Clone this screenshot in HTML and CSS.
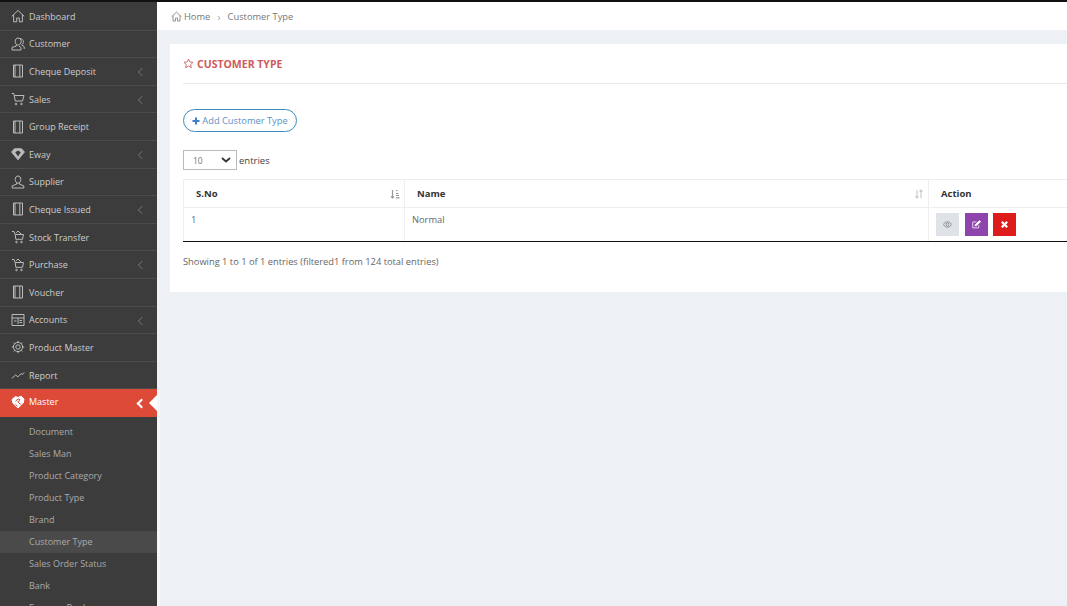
FILE: index.html
```html
<!DOCTYPE html>
<html lang="en">
<head>
    <meta charset="UTF-8">
    <meta name="viewport" content="width=device-width, initial-scale=1.0">
    <title>Customer Type</title>
    <link rel="stylesheet" href="styles.css">
</head>
<body>
    <svg class="defs" width="0" height="0">
        <symbol id="i-home" viewBox="0 0 14 14"><path d="M.8 7.400 7 1.400l6.200 6M2.600 5.800v7h3.100V9h2.600v3.800h3.100v-7"/></symbol>
        <symbol id="i-user" viewBox="0 0 14 14"><path d="M4.200 4.400C4.200 2.400 5.400 1 7 1s2.800 1.400 2.800 3.400S8.600 8.200 7 8.200 4.200 6.400 4.200 4.400zM5.600 8v1.200L1.200 10.800V13h11.600v-2.200L8.400 9.200V8"/></symbol>
        <symbol id="i-users" viewBox="0 0 14 14"><path d="M4.200 4.400C4.200 2.400 5.400 1 7 1s3.200 1.400 3.200 3.400S8.600 8.200 7 8.200 4.200 6.400 4.200 4.400zM5.200 8v1.200L1 10.400V13h9v-2.400L8 9.200M9 1.500c2 .2 3.400 1.400 3.400 3.200 0 1.400-.8 2.600-1.800 3.200l2.600 1.800V12"/></symbol>
        <symbol id="i-book" viewBox="0 0 14 14"><path d="M2.500 1h9v12h-9zM8.800 1v12M4 1v12"/></symbol>
        <symbol id="i-cart" viewBox="0 0 14 14"><path d="M.8 1.500h2l1.500 7.500h7.200l1.500-5.500H3.400"/><circle cx="5" cy="12" r=".8"/><circle cx="10.500" cy="12" r=".8"/></symbol>
        <symbol id="i-bag" viewBox="0 0 14 14"><path d="M1 1.500h2l1.200 3h8.300l-1 4.800H4.800L4.200 4.500M5.200 2.800 7 1l3 3"/><circle cx="5.500" cy="12" r=".8"/><circle cx="10.500" cy="12" r=".8"/></symbol>
        <symbol id="i-gem" viewBox="0 0 14 14"><path class="fill" d="M3.500 1.800h7L13.400 5 7 12.800.6 5z"/><path class="cut" d="M4.200 5.200 7 9.600l2.800-4.400L7 3.400z"/></symbol>
        <symbol id="i-calc" viewBox="0 0 14 14"><path d="M1 1.500h12v11H1zM7 5v6M1 5h12M3 8h2.500M8.500 7.500h2.500M8.500 9.500h2.500"/></symbol>
        <symbol id="i-gear" viewBox="0 0 14 14"><circle cx="7" cy="7" r="2.200"/><circle cx="7" cy="7" r="4.600"/><path d="M7 .8v1.600M7 11.600v1.600M.8 7h1.600M11.600 7h1.600M2.600 2.600l1.200 1.200M10.200 10.200l1.200 1.200M2.600 11.400l1.200-1.200M10.200 3.800l1.200-1.200"/></symbol>
        <symbol id="i-line" viewBox="0 0 14 14"><path d="M.8 10.500 4.500 7l2.500 1.800L10 5.500l1.500 1L13.200 4.500"/></symbol>
        <symbol id="i-shake" viewBox="0 0 14 14"><path class="fill-white" d="M1 4.500 4.500 1.500l2.500 1 3-1.300 3 2.800-.8 4L7 13 2 8.300z"/><path class="cut-red" d="M4.500 6.200 7.200 4l1.800.8L6.800 7l3 2.400M4.500 9.500l2 1.800"/></symbol>
        <symbol id="i-star" viewBox="0 0 14 14"><path d="M7 1.300 8.700 5l4.100.5-3 2.800.8 4.100L7 10.300l-3.600 2.100.8-4.100-3-2.800L5.300 5z"/></symbol>
    </svg>

    <div class="layout">
        <aside class="sidebar">
            <ul class="menu">
                <li class="menu-item"><svg class="icon"><use href="#i-home"/></svg>Dashboard</li>
                <li class="menu-item"><svg class="icon"><use href="#i-users"/></svg>Customer</li>
                <li class="menu-item has-sub"><svg class="icon"><use href="#i-book"/></svg>Cheque Deposit</li>
                <li class="menu-item has-sub"><svg class="icon"><use href="#i-cart"/></svg>Sales</li>
                <li class="menu-item"><svg class="icon"><use href="#i-book"/></svg>Group Receipt</li>
                <li class="menu-item has-sub"><svg class="icon"><use href="#i-gem"/></svg>Eway</li>
                <li class="menu-item"><svg class="icon"><use href="#i-user"/></svg>Supplier</li>
                <li class="menu-item has-sub"><svg class="icon"><use href="#i-book"/></svg>Cheque Issued</li>
                <li class="menu-item"><svg class="icon"><use href="#i-bag"/></svg>Stock Transfer</li>
                <li class="menu-item has-sub"><svg class="icon"><use href="#i-bag"/></svg>Purchase</li>
                <li class="menu-item"><svg class="icon"><use href="#i-book"/></svg>Voucher</li>
                <li class="menu-item has-sub"><svg class="icon"><use href="#i-calc"/></svg>Accounts</li>
                <li class="menu-item"><svg class="icon"><use href="#i-gear"/></svg>Product Master</li>
                <li class="menu-item"><svg class="icon"><use href="#i-line"/></svg>Report</li>
                <li class="menu-item has-sub active"><svg class="icon"><use href="#i-shake"/></svg>Master</li>
            </ul>
            <ul class="submenu">
                <li>Document</li>
                <li>Sales Man</li>
                <li>Product Category</li>
                <li>Product Type</li>
                <li>Brand</li>
                <li class="current">Customer Type</li>
                <li>Sales Order Status</li>
                <li>Bank</li>
                <li>Expense Book</li>
            </ul>
        </aside>

        <main class="main">
            <div class="breadcrumb">
                <svg class="crumb-icon"><use href="#i-home"/></svg>
                <span>Home</span>
                <span class="crumb-sep">&rsaquo;</span>
                <span>Customer Type</span>
            </div>

            <div class="content">
                <section class="card">
                    <h2 class="card-title"><svg class="star"><use href="#i-star"/></svg>CUSTOMER TYPE</h2>

                    <div class="card-body">
                        <a class="btn-add"><svg class="plus" viewBox="0 0 8 8"><path d="M4 .5v7M.5 4h7"/></svg>Add Customer Type</a>

                        <div class="length-row">
                            <span class="fake-select">10
                                <svg class="caret" viewBox="0 0 10 6"><path d="M1 1l4 3.500L9 1"/></svg>
                            </span>
                            <span>entries</span>
                        </div>

                        <table class="data-table">
                            <thead>
                                <tr>
                                    <th class="col-no">S.No
                                        <svg class="sort sort-on" viewBox="0 0 10 10"><path d="M2.500 1v8M1 7.500 2.500 9 4 7.500M6 1.500h1.500M6 4.500h2.500M6 6.500h3M6 8.800h3.500"/></svg>
                                    </th>
                                    <th class="col-name">Name
                                        <svg class="sort" viewBox="0 0 10 10"><path d="M3 1v8M1.500 7.500 3 9l1.500-1.500M7 9V1M5.500 2.500 7 1l1.500 1.500"/></svg>
                                    </th>
                                    <th class="col-action">Action</th>
                                </tr>
                            </thead>
                            <tbody>
                                <tr>
                                    <td>1</td>
                                    <td>Normal</td>
                                    <td>
                                        <div class="actions">
                                            <span class="act act-view"><svg viewBox="0 0 14 10"><path d="M.5 5C2.500 1.800 4.700.8 7 .8s4.500 1 6.500 4.200C11.500 8.200 9.300 9.200 7 9.200S2.500 8.200.5 5z"/><circle cx="7" cy="5" r="2.200"/></svg></span>
                                            <span class="act act-edit"><svg viewBox="0 0 12 12"><path d="M9 7v3.500H1v-8h5"/><path class="solid" d="M4.500 6 10 .8l1.500 1.400L6 7.500l-2 .4z"/></svg></span>
                                            <span class="act act-del"><svg viewBox="0 0 10 10"><path d="M2 2l6 6M8 2l-6 6"/></svg></span>
                                        </div>
                                    </td>
                                </tr>
                            </tbody>
                        </table>

                        <p class="table-info">Showing 1 to 1 of 1 entries (filtered1 from 124 total entries)</p>
                    </div>
                </section>
            </div>
        </main>
    </div>
</body>
</html>
```

FILE: styles.css
```css
* {
    box-sizing: border-box;
}
html, body {
    height: 100%;
    margin: 0;
    overflow: hidden;
}
body {
    font-family: "Open Sans", Arial, sans-serif;
    font-size: 9.3px;
    color: #555;
    background: #edf0f5;
    border-top: 2px solid #111;
}
ul {
    list-style: none;
    margin: 0;
    padding: 0;
}
.defs {
    position: absolute;
}
.layout {
    display: flex;
    height: 100%;
}

/* sidebar */
.sidebar {
    width: 157px;
    flex: none;
    padding-top: 1px;
    font-size: 9px;
    background: #3c3c3c;
    color: #ccc;
    overflow: hidden;
}
.menu-item {
    position: relative;
    display: flex;
    align-items: center;
    height: 27.6px;
    padding-left: 11px;
    border-bottom: 1px solid #4b4b4b;
    white-space: nowrap;
}
.icon {
    width: 14px;
    height: 14px;
    margin-right: 4px;
    fill: none;
    stroke: #bbb;
    stroke-width: 1;
}
.fill {
    fill: #bbb;
    stroke: #bbb;
}
.cut {
    fill: #3c3c3c;
    stroke: none;
}
.fill-white {
    fill: #fff;
    stroke: #fff;
}
.cut-red {
    fill: none;
    stroke: #dd4a38;
}
.has-sub::after {
    content: "";
    position: absolute;
    right: 12px;
    top: 11px;
    width: 5px;
    height: 5px;
    border-left: 1px solid #666;
    border-bottom: 1px solid #666;
    transform: rotate(45deg);
}
.active {
    align-items: flex-start;
    padding-top: 6px;
    background: #dd4a38;
    color: #fff;
    border-bottom: 0;
}
.active::after {
    border-color: #fff;
    border-width: 2px;
}
.active::before {
    content: "";
    position: absolute;
    right: 0;
    top: 6px;
    border: 8px solid transparent;
    border-right: 8px solid #fff;
    border-left: 0;
}
.submenu {
    padding-top: 4px;
    color: #aaa;
}
.submenu li {
    height: 22px;
    line-height: 22px;
    padding-left: 29px;
}
.submenu .current {
    background: #4a4a4a;
}

/* main */
.main {
    flex: 1;
    min-width: 0;
    background: linear-gradient(#f6f7fa, #f6f7fa) no-repeat 0 388px / 3px 100%;
}
.breadcrumb {
    display: flex;
    align-items: center;
    height: 28px;
    padding-left: 14px;
    background: #fff;
    color: #777;
}
.crumb-icon {
    width: 11px;
    height: 11px;
    margin-right: 2px;
    fill: none;
    stroke: #777;
    stroke-width: 1;
}
.crumb-sep {
    margin: 0 7px;
    font-size: 11px;
    color: #aaa;
}
.content {
    padding: 14px 0 0 13px;
}
.card {
    width: 1000px;
    height: 248px;
    background: #fff;
}
.card-title {
    display: flex;
    align-items: center;
    height: 40px;
    margin: 0 0 0 13px;
    border-bottom: 1px solid #e9e9e9;
    font-size: 10.5px;
    font-weight: 700;
    color: #cf5a5a;
}
.star {
    width: 11px;
    height: 11px;
    margin-right: 3px;
    fill: none;
    stroke: #cf5a5a;
    stroke-width: 1.1;
}
.card-body {
    padding: 25px 0 0 13px;
}
.btn-add {
    display: flex;
    align-items: center;
    justify-content: center;
    gap: 2px;
    width: 114px;
    height: 23px;
    border: 1px solid #3c8dbc;
    border-radius: 12px;
    color: #5b8fc5;
}
.plus {
    width: 8px;
    height: 8px;
    fill: none;
    stroke: #3f7fd0;
    stroke-width: 2;
}
.length-row {
    display: flex;
    align-items: center;
    gap: 2px;
    margin-top: 18px;
    font-size: 9.5px;
    color: #444;
}
.fake-select {
    display: flex;
    align-items: center;
    justify-content: space-between;
    width: 54px;
    height: 20px;
    padding: 0 5px 0 9px;
    border: 1px solid #bbb;
    color: #777;
    font-size: 8.5px;
}
.caret {
    width: 10px;
    height: 6px;
    fill: none;
    stroke: #333;
    stroke-width: 1.8;
}
.data-table {
    width: 1000px;
    margin-top: 9px;
    border-collapse: collapse;
    table-layout: fixed;
}
.data-table th {
    position: relative;
    height: 28px;
    padding: 0 0 0 12px;
    border: 1px solid #eee;
    text-align: left;
    font-size: 9.5px;
    font-weight: 700;
    color: #333;
}
.col-no {
    width: 221px;
}
.col-name {
    width: 524px;
}
.sort {
    position: absolute;
    right: 4px;
    top: 9px;
    width: 10px;
    height: 10px;
    fill: none;
    stroke: #ccc;
    stroke-width: 1.2;
}
.sort-on {
    stroke: #999;
}
.data-table td {
    height: 34px;
    padding: 5px 7px;
    border: 1px solid #eee;
    border-bottom: 1px solid #111;
    vertical-align: top;
    color: #666;
}
.actions {
    display: flex;
    gap: 5.7px;
}
.act {
    display: flex;
    align-items: center;
    justify-content: center;
    width: 23px;
    height: 23px;
}
.act svg {
    width: 9px;
    height: 9px;
    fill: none;
}
.act-view {
    background: #dfe3e8;
}
.act-view svg {
    stroke: #666;
}
.act-edit {
    background: #8e44ad;
}
.act-edit svg {
    stroke: #fff;
}
.act-edit .solid {
    fill: #fff;
}
.act-del {
    background: #df1c1c;
}
.act-del svg {
    stroke: #fff;
    stroke-width: 2.5;
}
.table-info {
    margin: 13px 0 0;
    color: #666;
}
```
